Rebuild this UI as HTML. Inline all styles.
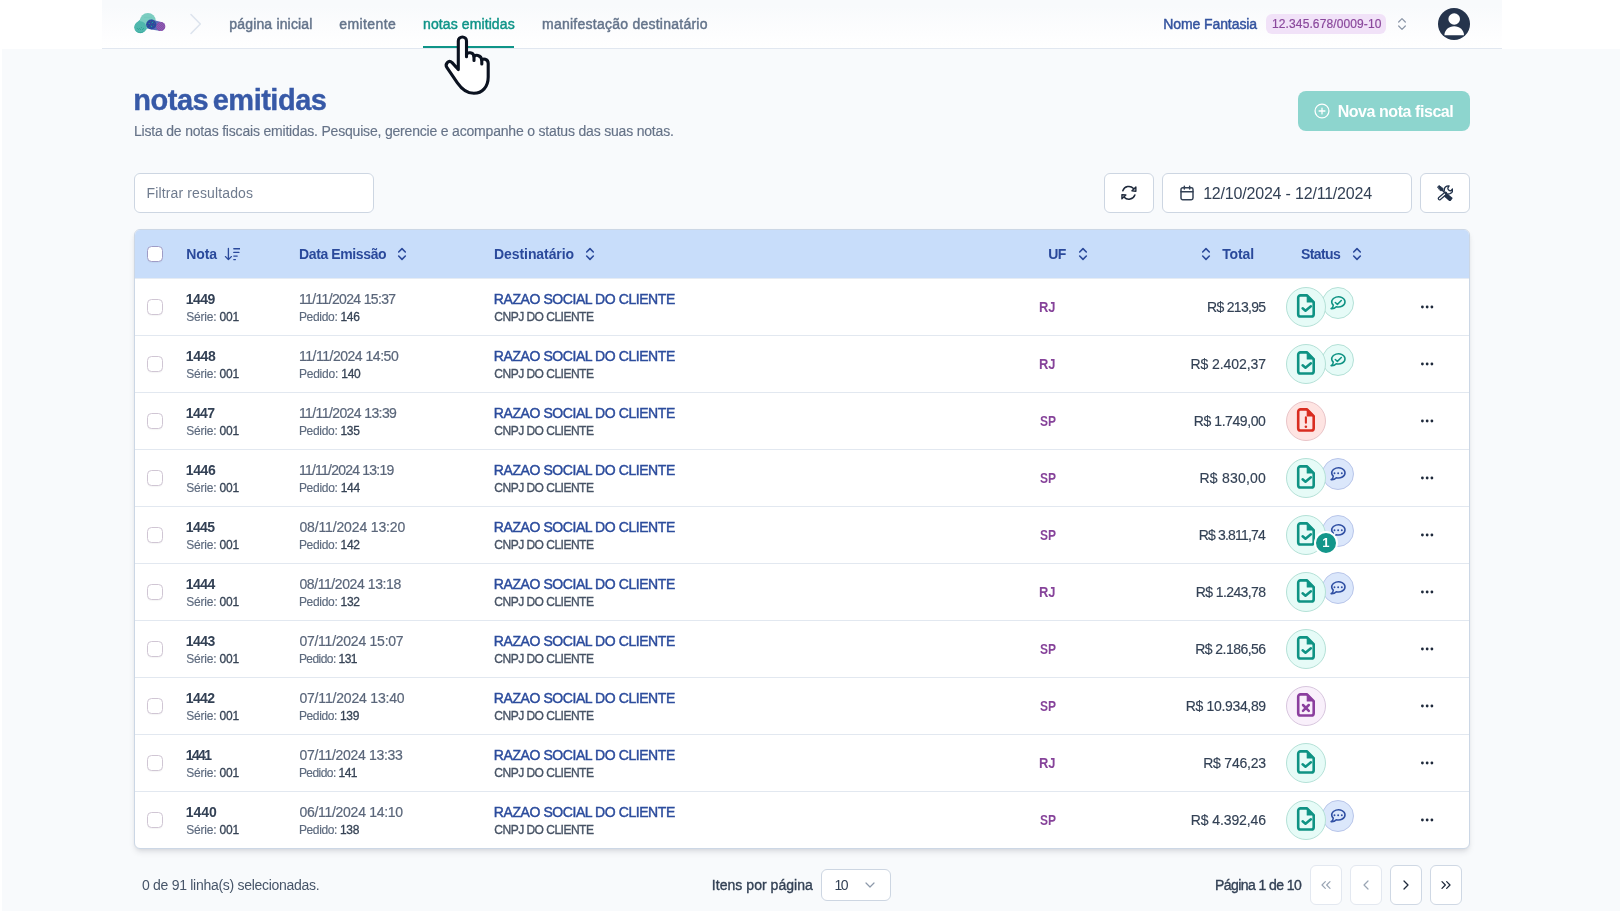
<!DOCTYPE html>
<html lang="pt-BR">
<head>
<meta charset="utf-8">
<title>notas emitidas</title>
<style>
*{box-sizing:border-box}
html,body{margin:0;padding:0;background:#fff}
body{font-family:"Liberation Sans",sans-serif;color:#334155;-webkit-font-smoothing:antialiased}
.page{position:relative;width:1620px;height:911px;overflow:hidden;will-change:transform}
.bg{position:absolute;left:2px;top:49px;right:0;bottom:0;background:#f8fafc}
.abs{position:absolute;white-space:nowrap}
svg{display:block}
.ic16{width:16px;height:16px;flex:none}
.ic24{width:24px;height:24px;flex:none}

/* top bar */
header.top{position:absolute;left:102px;top:0;width:1400px;height:49px;border-bottom:1px solid #e1e7f0;background:linear-gradient(#f8fafc 0,#f8fafc 12%,#fdfdfe 70%,#fff 100%)}
nav a{position:absolute;top:14px;font-size:14px;line-height:20px;color:#64748b;text-decoration:none;white-space:nowrap;-webkit-text-stroke:.45px currentColor}
nav a.on{color:#0f9488}
nav a.on:after{content:"";position:absolute;left:-.4px;right:.3px;top:32px;height:2px;background:#0f9488}
.org{position:absolute;top:14px;font-size:14px;line-height:20px;color:#34539f;white-space:nowrap;-webkit-text-stroke:.45px currentColor}
.pill{position:absolute;left:1164px;top:14px;width:120px;height:20px;border-radius:6px;background:#f1e2f8;color:#8a489c;font-size:12px;line-height:20px;white-space:nowrap;padding-left:6.05px;-webkit-text-stroke:.2px currentColor}
.avatar{position:absolute;left:1336px;top:8px;width:32px;height:32px}

/* heading */
h1{position:absolute;left:133.34px;top:82px;margin:0;font-size:29px;line-height:36px;font-weight:700;color:#3759a7;white-space:nowrap;-webkit-text-stroke:.35px currentColor}
p.sub{-webkit-text-stroke:.15px currentColor;position:absolute;left:133.96px;top:121px;margin:0;font-size:14px;line-height:20px;color:#667388;white-space:nowrap}
.btn-new{position:absolute;left:1298px;top:91px;width:172px;height:40px;border-radius:8px;background:#8dd5ce;color:#fff;font-weight:700;font-size:16px;line-height:40px;white-space:nowrap}
.btn-new svg{position:absolute;left:16px;top:12px}
.btn-new span{position:absolute;left:39.65px;top:1px}

/* toolbar */
.field{position:absolute;top:173px;height:40px;border:1px solid #cdd6e2;border-radius:6px;background:#fff}
.field.filter{left:134px;width:240px;font-size:14px;line-height:38px;color:#6f7b8e;padding-left:11.56px;white-space:nowrap}
.field svg{position:absolute}
.field.date span{position:absolute;left:40.15px;top:1px;font-size:16px;line-height:38px;color:#334155;white-space:nowrap}

/* table */
.card{position:absolute;left:134px;top:229px;width:1336px;height:620px;border:1px solid #ccd7e5;border-radius:6px;background:#fff;overflow:hidden;box-shadow:0 4px 6px -1px rgba(15,23,42,.10),0 2px 4px -2px rgba(15,23,42,.10)}
table{border-collapse:separate;border-spacing:0;table-layout:fixed;width:1334px}
th,td{padding:0;margin:0;text-align:left;white-space:nowrap;overflow:visible}
thead th{height:49px;border-bottom:1px solid #e6ecf4;background:#c8ddfa;font-size:14px;line-height:20px;font-weight:700;color:#2a499b}
tbody td{height:57px;border-bottom:1px solid #e2e8f0;vertical-align:middle}
tbody tr:last-child td{height:56px;border-bottom:0}
.hl{display:block;height:20px}
thead svg{position:absolute;top:16px}
.cb{display:block;width:16px;height:16px;border:1px solid #d0c6d4;border-radius:4.5px;background:#fff;margin-left:12px;box-shadow:0 1px 1px rgba(0,0,0,.04)}
thead .cb{border-color:#9f9cc6}
.l1{font-size:14px;line-height:20px}
.l2{font-size:12px;line-height:16px;color:#5d6a7e;-webkit-text-stroke:.15px currentColor}
.l2 b{font-weight:400;color:#364355;-webkit-text-stroke:.3px currentColor}
.b{font-weight:700;color:#334155}
.dt{color:#5a667a;-webkit-text-stroke:.2px currentColor}
.rz{color:#2c4c9d;-webkit-text-stroke:.45px currentColor}
.cn{color:#475365;-webkit-text-stroke:.35px currentColor}
.uf{display:inline-block;font-size:14px;line-height:20px;font-weight:700;color:#86439a;transform-origin:0 50%}
.tot{font-size:14px;line-height:20px;color:#334155;-webkit-text-stroke:.15px currentColor}
.tot{display:inline-block}
.stw{position:relative;height:56px}
.st{position:absolute;left:8.5px;top:8px;width:40px;height:40px;border-radius:50%;border:1px solid;z-index:2}
.st svg{position:absolute;left:7.500px;top:6px}
.st-ok{background:#e6fbf7;border-color:#b4e1d7}
.st-err{background:#fee4e2;border-color:#e9c4c8}
.st-can{background:#f9f0fb;border-color:#d8c6de}
.ch{position:absolute;left:45px;top:8px;width:32px;height:32px;border-radius:50%;border:1px solid;z-index:1}
.ch svg{position:absolute;left:7px;top:7px}
.ch-ok{background:#e6fbf7;border-color:#b4e1d7}
.ch-msg{background:#dbe7fb;border-color:#b9c6ea}
.bdg{position:absolute;left:37px;top:24px;width:24px;height:24px;border-radius:50%;background:#13968a;border:2px solid #fff;color:#fff;font-size:13px;line-height:20px;font-weight:700;text-align:center;z-index:3;text-indent:-.5px}
.dots{display:block;margin-left:20px;width:16px;height:16px}

/* footer */
.ft{position:absolute;top:875px;font-size:14px;line-height:20px;white-space:nowrap}
.sel{position:absolute;left:821px;top:869px;width:70px;height:32px;border:1px solid #cdd6e2;border-radius:6px;background:#fff;font-size:14px;line-height:30px;color:#334155}
.sel span{position:absolute;left:12.38px;top:0}
.sel svg{position:absolute;left:40px;top:7px}
.pg{position:absolute;top:865px;width:32px;height:40px;border:1px solid #cfd8e4;border-radius:6px;background:#fff}
.pg svg{position:absolute;left:7px;top:11px}
.pg.dis{border-color:#e3e8f0}
</style>
</head>
<body>
<div class="page">
<div class="bg"></div>

<header class="top">
  <svg class="abs" style="left:30px;top:10px" width="38" height="26" viewBox="0 0 38 26">
    <defs>
      <pattern id="pd1" width="2" height="2" patternUnits="userSpaceOnUse"><rect width="1" height="1" fill="#6b80c8"/><rect x="1" y="1" width="1" height="1" fill="#6b80c8"/></pattern>
    </defs>
    <line x1="8.300" y1="17.300" x2="14" y2="12" stroke="#4fb7ad" stroke-width="11.600" stroke-linecap="round"/>
    <circle cx="15.850" cy="10.800" r="7.900" fill="#7bcdc1"/>
    <circle cx="8.300" cy="17.300" r="6" fill="#4fb7ad"/>
    <path d="M19.200 9.400L30.300 12.250 28.800 21 19.200 19.600z" fill="#5b70b9"/>
    <circle cx="28.800" cy="16.500" r="4.500" fill="#9a3fa0"/>
    <circle cx="28.800" cy="16.500" r="4.500" fill="url(#pd1)" opacity=".7"/>
    <circle cx="19.200" cy="14.500" r="5.100" fill="#2a4ba0"/>
    <g fill="#19b394"><circle cx="17.300" cy="13.500" r=".55"/><circle cx="20.400" cy="12.400" r=".55"/><circle cx="19.500" cy="16.400" r=".55"/></g>
    <g fill="#7a6c66"><circle cx="18.400" cy="11.300" r=".4"/><circle cx="21.600" cy="11.300" r=".4"/><circle cx="16.300" cy="13.400" r=".4"/><circle cx="19.500" cy="13.400" r=".4"/><circle cx="22.500" cy="13.400" r=".4"/><circle cx="15.400" cy="15.400" r=".4"/><circle cx="18.400" cy="15.400" r=".4"/><circle cx="21.600" cy="15.400" r=".4"/><circle cx="17.500" cy="17.500" r=".4"/></g>
    <g fill="#2a9f91"><circle cx="5.300" cy="18.400" r=".5"/><circle cx="7.400" cy="18.400" r=".5"/><circle cx="9.400" cy="17.500" r=".5"/><circle cx="11.500" cy="18.400" r=".5"/><circle cx="6.400" cy="19.500" r=".5"/><circle cx="8.500" cy="19.500" r=".5"/><circle cx="10.600" cy="19.500" r=".5"/><path d="M5 21.300c2 1.600 5 1.600 7-.2-1.500 2.300-5.300 2.500-7 .2z"/></g>
    <g fill="#5bbdb2"><circle cx="13" cy="7.300" r=".45"/><circle cx="15" cy="7.300" r=".45"/><circle cx="17" cy="7.300" r=".45"/><circle cx="19" cy="7.300" r=".45"/></g>
  </svg>
  <svg class="abs" style="left:84px;top:12px" width="20" height="24" viewBox="0 0 20 24" fill="none" stroke="#dde4ee" stroke-width="1.6" stroke-linecap="round" stroke-linejoin="round"><path d="M5 2.5l9.3 9.5-9.3 9.5"/></svg>
  <nav>
    <a style="left:127.27px;letter-spacing:0.17px">página inicial</a>
    <a style="left:237.21px;letter-spacing:0.42px">emitente</a>
    <a class="on" style="left:321.07px;letter-spacing:0.10px">notas emitidas</a>
    <a style="left:439.97px;letter-spacing:0.25px">manifestação destinatário</a>
  </nav>
  <div class="org" style="left:1061.16px;letter-spacing:-0.08px">Nome Fantasia</div>
  <div class="pill"><span style="letter-spacing:0.11px">12.345.678/0009-10</span></div>
  <svg class="abs ic16" style="left:1292px;top:16px" viewBox="0 0 24 24" fill="none" stroke="#8a95a6" stroke-width="1.8" stroke-linecap="round" stroke-linejoin="round"><path d="m7 15 5 5 5-5"/><path d="m7 9 5-5 5 5"/></svg>
  <svg class="avatar" viewBox="0 0 32 32"><circle cx="16" cy="16" r="16" fill="#25344c"/><circle cx="16.2" cy="11" r="5.8" fill="#fff"/><path d="M6.4 27.2c0-5 4.300-8.900 9.800-8.900s9.800 3.900 9.800 8.900z" fill="#fff"/></svg>
</header>

<main>
  <h1 style="letter-spacing:-0.50px;word-spacing:-3px">notas emitidas</h1>
  <p class="sub" style="letter-spacing:-0.19px">Lista de notas fiscais emitidas. Pesquise, gerencie e acompanhe o status das suas notas.</p>
  <div class="btn-new">
    <svg class="ic16" viewBox="0 0 24 24" fill="none" stroke="#fff" stroke-width="1.9" stroke-linecap="round"><circle cx="12" cy="12" r="10.4"/><path d="M7.600 12h8.800M12 7.600v8.800"/></svg>
    <span style="letter-spacing:-0.44px">Nova nota fiscal</span>
  </div>

  <div class="field filter"><span style="letter-spacing:0.13px">Filtrar resultados</span></div>
  <div class="field" style="left:1104px;width:50px">
    <svg class="ic16" style="left:16px;top:11px" viewBox="0 0 16 16" fill="none" stroke="#1e293b" stroke-width="1.500" stroke-linecap="round" stroke-linejoin="round"><path d="M1.800 5.700A6.400 6.400 0 0 1 12.500 3.500"/><path d="M14.900 2v4.300l-4-.500z" fill="#1e293b" fill-opacity=".35" stroke-width="1.300"/><path d="M13.850 10A6.400 6.400 0 0 1 3.200 12.200"/><path d="M.9 13.900V9.600l4 .400z" fill="#1e293b" fill-opacity=".35" stroke-width="1.300"/></svg>
  </div>
  <div class="field date" style="left:1162px;width:250px">
    <svg class="ic16" style="left:15.5px;top:11px" viewBox="0 0 24 24" fill="none" stroke="#334155" stroke-width="2.200" stroke-linecap="round" stroke-linejoin="round"><path d="M8 2v4M16 2v4"/><rect width="18" height="18" x="3" y="4" rx="2.500"/><path d="M3 10h18"/></svg>
    <span style="letter-spacing:-0.19px">12/10/2024 - 12/11/2024</span>
  </div>
  <div class="field" style="left:1420px;width:50px">
    <svg class="ic16" style="left:16px;top:11px" viewBox="0 0 16 16" fill="none" stroke="#22324a" stroke-linecap="round" stroke-linejoin="round"><path d="M8.500 8.500 2.600 13.500" stroke-width="3.700"/><path d="M8.500 8.500 2.600 13.500" stroke="#fff" stroke-width="1.300"/><path d="M7.400 5.300C7 2.700 9 .700 12.100.900L10.900 2.900c-.300 1.700 1.300 3.100 3.100 2.800l1.500-1.700c.500 2-.500 4-2.500 4.700L10 9.300" stroke-width="1.300"/><path d="M4.800 4.600 10 9.800" stroke-width="1.500"/><path d="M.700 1.800 2.200.500 6.300 3.700 5.600 5.700 3.400 5.600z" fill="#22324a" stroke-width=".8"/><path d="M9.600 9.300 14.600 13.200 12.900 15.400 8.200 11.300z" fill="#22324a" stroke-width="1.800"/></svg>
  </div>

  <div class="card">
  <table>
    <colgroup><col style="width:39px"><col style="width:113px"><col style="width:195px"><col style="width:545px"><col style="width:73px"><col style="width:177px"><col style="width:123px"><col style="width:69px"></colgroup>
    <thead><tr>
      <th><span class="cb"></span></th>
      <th style="padding-left:12.37px"><span class="hl"><span style="letter-spacing:-0.11px">Nota</span><svg class="ic16" style="left:89.400px" viewBox="0 0 16 16" fill="none" stroke="#2a499b" stroke-width="1.35" stroke-linecap="round" stroke-linejoin="round"><path d="M4.400 2.400v11.200M1.500 10.600l2.900 3 2.900-3M9.800 2.700h6.800M9.800 6.400h5.100M9.800 10.100h3.400M9.800 13.600h1.600"/></svg></span></th>
      <th style="padding-left:12.07px"><span class="hl"><span style="letter-spacing:-0.39px">Data Emissão</span><svg class="ic16" style="left:259.1px" viewBox="0 0 24 24" fill="none" stroke="#2b4a9b" stroke-width="2.4000000000000004" stroke-linecap="round" stroke-linejoin="round"><path d="m7 15 5 5 5-5"/><path d="m7 9 5-5 5 5"/></svg></span></th>
      <th style="padding-left:12.07px"><span class="hl"><span style="letter-spacing:-0.08px">Destinatário</span><svg class="ic16" style="left:447.4px" viewBox="0 0 24 24" fill="none" stroke="#2b4a9b" stroke-width="2.4000000000000004" stroke-linecap="round" stroke-linejoin="round"><path d="m7 15 5 5 5-5"/><path d="m7 9 5-5 5 5"/></svg></span></th>
      <th style="padding-left:21.29px"><span class="hl"><span style="letter-spacing:-0.75px">UF</span><svg class="ic16" style="left:939.6px" viewBox="0 0 24 24" fill="none" stroke="#2b4a9b" stroke-width="2.4000000000000004" stroke-linecap="round" stroke-linejoin="round"><path d="m7 15 5 5 5-5"/><path d="m7 9 5-5 5 5"/></svg></span></th>
      <th style="padding-left:122.25px"><span class="hl"><svg class="ic16" style="left:1062.8px" viewBox="0 0 24 24" fill="none" stroke="#2b4a9b" stroke-width="2.4000000000000004" stroke-linecap="round" stroke-linejoin="round"><path d="m7 15 5 5 5-5"/><path d="m7 9 5-5 5 5"/></svg><span style="letter-spacing:-0.14px">Total</span></span></th>
      <th style="padding-left:23.93px"><span class="hl"><span style="letter-spacing:-0.60px">Status</span><svg class="ic16" style="left:1214.1px" viewBox="0 0 24 24" fill="none" stroke="#2b4a9b" stroke-width="2.4000000000000004" stroke-linecap="round" stroke-linejoin="round"><path d="m7 15 5 5 5-5"/><path d="m7 9 5-5 5 5"/></svg></span></th>
      <th></th>
    </tr></thead>
    <tbody>
<tr>
<td class="c-chk"><span class="cb"></span></td>
<td class="c-nota"><div class="l1 b" style="margin-left:11.83px;letter-spacing:-0.56px">1449</div><div class="l2" style="margin-left:12.15px;letter-spacing:-0.18px">Série: <b>001</b></div></td>
<td class="c-data"><div class="l1 dt" style="margin-left:11.98px;letter-spacing:-0.65px">11/11/2024 15:37</div><div class="l2" style="margin-left:11.90px;letter-spacing:-0.31px">Pedido: <b>146</b></div></td>
<td class="c-dest"><div class="l1 rz" style="margin-left:11.86px;letter-spacing:-0.43px">RAZAO SOCIAL DO CLIENTE</div><div class="l2 cn" style="margin-left:12.35px;letter-spacing:-0.51px">CNPJ DO CLIENTE</div></td>
<td class="c-uf"><span class="uf" style="margin-left:12.27px;transform:scaleX(0.924)">RJ</span></td>
<td class="c-tot"><span class="tot" style="margin-left:106.96px;letter-spacing:-0.68px">R$ 213,95</span></td>
<td class="c-st"><div class="stw"><span class="st st-ok"><svg class="ic24" viewBox="0 0 24 24" fill="none" stroke="#0f9384" stroke-width="2.6" stroke-linecap="round" stroke-linejoin="round"><path d="M6.7 1.35h6.3l6.7 6.7v12.1a2.3 2.3 0 0 1-2.3 2.3H6.500a2.3 2.3 0 0 1-2.3-2.300V3.650a2.3 2.3 0 0 1 2.500-2.300z"/><path d="M13.300 1.500v6.400h6.400z" fill="#0f9384" stroke-width="1.200"/><path d="m8.600 14.300 2.900 2.500 5.400-4.500" stroke-width="2.5"/></svg></span><span class="ch ch-ok"><svg class="ic16" viewBox="0 0 16 16" fill="none" stroke="#0f9384" stroke-width="1.550" stroke-linecap="round" stroke-linejoin="round"><path d="M6.300 11.750A6.650 5.100 0 1 0 3.260 10.180C3.200 11.600 2.400 12.900 1.100 13.700 3.100 13.900 5 13.200 6.300 11.750z"/><path d="m5.300 7.500 2.100 1.900 3.900-3.900" stroke-width="1.500"/></svg></span></div></td>
<td class="c-act"><svg class="dots" viewBox="0 0 16 16" fill="#1e293b"><circle cx="2.400" cy="8" r="1.400"/><circle cx="7.150" cy="8" r="1.400"/><circle cx="11.900" cy="8" r="1.400"/></svg></td>
</tr>
<tr>
<td class="c-chk"><span class="cb"></span></td>
<td class="c-nota"><div class="l1 b" style="margin-left:11.83px;letter-spacing:-0.39px">1448</div><div class="l2" style="margin-left:12.15px;letter-spacing:-0.18px">Série: <b>001</b></div></td>
<td class="c-data"><div class="l1 dt" style="margin-left:11.98px;letter-spacing:-0.48px">11/11/2024 14:50</div><div class="l2" style="margin-left:11.90px;letter-spacing:-0.22px">Pedido: <b>140</b></div></td>
<td class="c-dest"><div class="l1 rz" style="margin-left:11.86px;letter-spacing:-0.43px">RAZAO SOCIAL DO CLIENTE</div><div class="l2 cn" style="margin-left:12.35px;letter-spacing:-0.51px">CNPJ DO CLIENTE</div></td>
<td class="c-uf"><span class="uf" style="margin-left:12.27px;transform:scaleX(0.924)">RJ</span></td>
<td class="c-tot"><span class="tot" style="margin-left:90.46px;letter-spacing:-0.06px">R$ 2.402,37</span></td>
<td class="c-st"><div class="stw"><span class="st st-ok"><svg class="ic24" viewBox="0 0 24 24" fill="none" stroke="#0f9384" stroke-width="2.6" stroke-linecap="round" stroke-linejoin="round"><path d="M6.7 1.35h6.3l6.7 6.7v12.1a2.3 2.3 0 0 1-2.3 2.3H6.500a2.3 2.3 0 0 1-2.3-2.300V3.650a2.3 2.3 0 0 1 2.500-2.300z"/><path d="M13.300 1.500v6.400h6.400z" fill="#0f9384" stroke-width="1.200"/><path d="m8.600 14.300 2.900 2.500 5.400-4.500" stroke-width="2.5"/></svg></span><span class="ch ch-ok"><svg class="ic16" viewBox="0 0 16 16" fill="none" stroke="#0f9384" stroke-width="1.550" stroke-linecap="round" stroke-linejoin="round"><path d="M6.300 11.750A6.650 5.100 0 1 0 3.260 10.180C3.200 11.600 2.400 12.900 1.100 13.700 3.100 13.900 5 13.200 6.300 11.750z"/><path d="m5.300 7.500 2.100 1.900 3.900-3.900" stroke-width="1.500"/></svg></span></div></td>
<td class="c-act"><svg class="dots" viewBox="0 0 16 16" fill="#1e293b"><circle cx="2.400" cy="8" r="1.400"/><circle cx="7.150" cy="8" r="1.400"/><circle cx="11.900" cy="8" r="1.400"/></svg></td>
</tr>
<tr>
<td class="c-chk"><span class="cb"></span></td>
<td class="c-nota"><div class="l1 b" style="margin-left:11.83px;letter-spacing:-0.65px">1447</div><div class="l2" style="margin-left:12.15px;letter-spacing:-0.18px">Série: <b>001</b></div></td>
<td class="c-data"><div class="l1 dt" style="margin-left:11.98px;letter-spacing:-0.60px">11/11/2024 13:39</div><div class="l2" style="margin-left:11.90px;letter-spacing:-0.31px">Pedido: <b>135</b></div></td>
<td class="c-dest"><div class="l1 rz" style="margin-left:11.86px;letter-spacing:-0.43px">RAZAO SOCIAL DO CLIENTE</div><div class="l2 cn" style="margin-left:12.35px;letter-spacing:-0.51px">CNPJ DO CLIENTE</div></td>
<td class="c-uf"><span class="uf" style="margin-left:12.93px;transform:scaleX(0.857)">SP</span></td>
<td class="c-tot"><span class="tot" style="margin-left:93.71px;letter-spacing:-0.41px">R$ 1.749,00</span></td>
<td class="c-st"><div class="stw"><span class="st st-err"><svg class="ic24" viewBox="0 0 24 24" fill="none" stroke="#d92d20" stroke-width="2.6" stroke-linecap="round" stroke-linejoin="round"><path d="M6.7 1.35h6.3l6.7 6.7v12.1a2.3 2.3 0 0 1-2.3 2.3H6.500a2.3 2.3 0 0 1-2.3-2.300V3.650a2.3 2.3 0 0 1 2.500-2.300z"/><path d="M13.300 1.500v6.400h6.400z" fill="#d92d20" stroke-width="1.200"/><path d="M11.900 9.400v5.300" stroke-width="2.100"/><circle cx="11.900" cy="18.700" r="1.300" fill="#d92d20" stroke="none"/></svg></span></div></td>
<td class="c-act"><svg class="dots" viewBox="0 0 16 16" fill="#1e293b"><circle cx="2.400" cy="8" r="1.400"/><circle cx="7.150" cy="8" r="1.400"/><circle cx="11.900" cy="8" r="1.400"/></svg></td>
</tr>
<tr>
<td class="c-chk"><span class="cb"></span></td>
<td class="c-nota"><div class="l1 b" style="margin-left:11.83px;letter-spacing:-0.39px">1446</div><div class="l2" style="margin-left:12.15px;letter-spacing:-0.18px">Série: <b>001</b></div></td>
<td class="c-data"><div class="l1 dt" style="margin-left:11.98px;letter-spacing:-0.78px">11/11/2024 13:19</div><div class="l2" style="margin-left:11.90px;letter-spacing:-0.28px">Pedido: <b>144</b></div></td>
<td class="c-dest"><div class="l1 rz" style="margin-left:11.86px;letter-spacing:-0.43px">RAZAO SOCIAL DO CLIENTE</div><div class="l2 cn" style="margin-left:12.35px;letter-spacing:-0.51px">CNPJ DO CLIENTE</div></td>
<td class="c-uf"><span class="uf" style="margin-left:12.93px;transform:scaleX(0.857)">SP</span></td>
<td class="c-tot"><span class="tot" style="margin-left:99.46px;letter-spacing:0.23px">R$ 830,00</span></td>
<td class="c-st"><div class="stw"><span class="st st-ok"><svg class="ic24" viewBox="0 0 24 24" fill="none" stroke="#0f9384" stroke-width="2.6" stroke-linecap="round" stroke-linejoin="round"><path d="M6.7 1.35h6.3l6.7 6.7v12.1a2.3 2.3 0 0 1-2.3 2.3H6.500a2.3 2.3 0 0 1-2.3-2.300V3.650a2.3 2.3 0 0 1 2.500-2.300z"/><path d="M13.300 1.500v6.400h6.400z" fill="#0f9384" stroke-width="1.200"/><path d="m8.600 14.300 2.900 2.500 5.400-4.500" stroke-width="2.5"/></svg></span><span class="ch ch-msg"><svg class="ic16" viewBox="0 0 16 16" fill="none" stroke="#2f4fa3" stroke-width="1.550" stroke-linecap="round" stroke-linejoin="round"><path d="M6.300 11.750A6.650 5.100 0 1 0 3.260 10.180C3.200 11.600 2.400 12.900 1.100 13.700 3.100 13.900 5 13.200 6.300 11.750z"/><circle cx="4.500" cy="7.200" r=".95" fill="#2f4fa3" stroke="none"/><circle cx="8.150" cy="7.200" r=".95" fill="#2f4fa3" stroke="none"/><circle cx="11.800" cy="7.200" r=".95" fill="#2f4fa3" stroke="none"/></svg></span></div></td>
<td class="c-act"><svg class="dots" viewBox="0 0 16 16" fill="#1e293b"><circle cx="2.400" cy="8" r="1.400"/><circle cx="7.150" cy="8" r="1.400"/><circle cx="11.900" cy="8" r="1.400"/></svg></td>
</tr>
<tr>
<td class="c-chk"><span class="cb"></span></td>
<td class="c-nota"><div class="l1 b" style="margin-left:11.83px;letter-spacing:-0.64px">1445</div><div class="l2" style="margin-left:12.15px;letter-spacing:-0.18px">Série: <b>001</b></div></td>
<td class="c-data"><div class="l1 dt" style="margin-left:12.41px;letter-spacing:-0.14px">08/11/2024 13:20</div><div class="l2" style="margin-left:11.90px;letter-spacing:-0.30px">Pedido: <b>142</b></div></td>
<td class="c-dest"><div class="l1 rz" style="margin-left:11.86px;letter-spacing:-0.43px">RAZAO SOCIAL DO CLIENTE</div><div class="l2 cn" style="margin-left:12.35px;letter-spacing:-0.51px">CNPJ DO CLIENTE</div></td>
<td class="c-uf"><span class="uf" style="margin-left:12.93px;transform:scaleX(0.857)">SP</span></td>
<td class="c-tot"><span class="tot" style="margin-left:98.71px;letter-spacing:-0.81px">R$ 3.811,74</span></td>
<td class="c-st"><div class="stw"><span class="st st-ok"><svg class="ic24" viewBox="0 0 24 24" fill="none" stroke="#0f9384" stroke-width="2.6" stroke-linecap="round" stroke-linejoin="round"><path d="M6.7 1.35h6.3l6.7 6.7v12.1a2.3 2.3 0 0 1-2.3 2.3H6.500a2.3 2.3 0 0 1-2.3-2.300V3.650a2.3 2.3 0 0 1 2.500-2.300z"/><path d="M13.300 1.500v6.400h6.400z" fill="#0f9384" stroke-width="1.200"/><path d="m8.600 14.300 2.900 2.500 5.400-4.500" stroke-width="2.5"/></svg></span><span class="ch ch-msg"><svg class="ic16" viewBox="0 0 16 16" fill="none" stroke="#2f4fa3" stroke-width="1.550" stroke-linecap="round" stroke-linejoin="round"><path d="M6.300 11.750A6.650 5.100 0 1 0 3.260 10.180C3.200 11.600 2.400 12.900 1.100 13.700 3.100 13.900 5 13.200 6.300 11.750z"/><circle cx="4.500" cy="7.200" r=".95" fill="#2f4fa3" stroke="none"/><circle cx="8.150" cy="7.200" r=".95" fill="#2f4fa3" stroke="none"/><circle cx="11.800" cy="7.200" r=".95" fill="#2f4fa3" stroke="none"/></svg></span><span class="bdg">1</span></div></td>
<td class="c-act"><svg class="dots" viewBox="0 0 16 16" fill="#1e293b"><circle cx="2.400" cy="8" r="1.400"/><circle cx="7.150" cy="8" r="1.400"/><circle cx="11.900" cy="8" r="1.400"/></svg></td>
</tr>
<tr>
<td class="c-chk"><span class="cb"></span></td>
<td class="c-nota"><div class="l1 b" style="margin-left:11.83px;letter-spacing:-0.54px">1444</div><div class="l2" style="margin-left:12.15px;letter-spacing:-0.18px">Série: <b>001</b></div></td>
<td class="c-data"><div class="l1 dt" style="margin-left:12.41px;letter-spacing:-0.41px">08/11/2024 13:18</div><div class="l2" style="margin-left:11.90px;letter-spacing:-0.30px">Pedido: <b>132</b></div></td>
<td class="c-dest"><div class="l1 rz" style="margin-left:11.86px;letter-spacing:-0.43px">RAZAO SOCIAL DO CLIENTE</div><div class="l2 cn" style="margin-left:12.35px;letter-spacing:-0.51px">CNPJ DO CLIENTE</div></td>
<td class="c-uf"><span class="uf" style="margin-left:12.27px;transform:scaleX(0.924)">RJ</span></td>
<td class="c-tot"><span class="tot" style="margin-left:95.71px;letter-spacing:-0.59px">R$ 1.243,78</span></td>
<td class="c-st"><div class="stw"><span class="st st-ok"><svg class="ic24" viewBox="0 0 24 24" fill="none" stroke="#0f9384" stroke-width="2.6" stroke-linecap="round" stroke-linejoin="round"><path d="M6.7 1.35h6.3l6.7 6.7v12.1a2.3 2.3 0 0 1-2.3 2.3H6.500a2.3 2.3 0 0 1-2.3-2.300V3.650a2.3 2.3 0 0 1 2.500-2.300z"/><path d="M13.300 1.500v6.400h6.400z" fill="#0f9384" stroke-width="1.200"/><path d="m8.600 14.300 2.900 2.500 5.400-4.500" stroke-width="2.5"/></svg></span><span class="ch ch-msg"><svg class="ic16" viewBox="0 0 16 16" fill="none" stroke="#2f4fa3" stroke-width="1.550" stroke-linecap="round" stroke-linejoin="round"><path d="M6.300 11.750A6.650 5.100 0 1 0 3.260 10.180C3.200 11.600 2.400 12.900 1.100 13.700 3.100 13.900 5 13.200 6.300 11.750z"/><circle cx="4.500" cy="7.200" r=".95" fill="#2f4fa3" stroke="none"/><circle cx="8.150" cy="7.200" r=".95" fill="#2f4fa3" stroke="none"/><circle cx="11.800" cy="7.200" r=".95" fill="#2f4fa3" stroke="none"/></svg></span></div></td>
<td class="c-act"><svg class="dots" viewBox="0 0 16 16" fill="#1e293b"><circle cx="2.400" cy="8" r="1.400"/><circle cx="7.150" cy="8" r="1.400"/><circle cx="11.900" cy="8" r="1.400"/></svg></td>
</tr>
<tr>
<td class="c-chk"><span class="cb"></span></td>
<td class="c-nota"><div class="l1 b" style="margin-left:11.83px;letter-spacing:-0.56px">1443</div><div class="l2" style="margin-left:12.15px;letter-spacing:-0.18px">Série: <b>001</b></div></td>
<td class="c-data"><div class="l1 dt" style="margin-left:12.41px;letter-spacing:-0.25px">07/11/2024 15:07</div><div class="l2" style="margin-left:11.90px;letter-spacing:-0.55px">Pedido: <b>131</b></div></td>
<td class="c-dest"><div class="l1 rz" style="margin-left:11.86px;letter-spacing:-0.43px">RAZAO SOCIAL DO CLIENTE</div><div class="l2 cn" style="margin-left:12.35px;letter-spacing:-0.51px">CNPJ DO CLIENTE</div></td>
<td class="c-uf"><span class="uf" style="margin-left:12.93px;transform:scaleX(0.857)">SP</span></td>
<td class="c-tot"><span class="tot" style="margin-left:95.21px;letter-spacing:-0.54px">R$ 2.186,56</span></td>
<td class="c-st"><div class="stw"><span class="st st-ok"><svg class="ic24" viewBox="0 0 24 24" fill="none" stroke="#0f9384" stroke-width="2.6" stroke-linecap="round" stroke-linejoin="round"><path d="M6.7 1.35h6.3l6.7 6.7v12.1a2.3 2.3 0 0 1-2.3 2.3H6.500a2.3 2.3 0 0 1-2.3-2.300V3.650a2.3 2.3 0 0 1 2.500-2.300z"/><path d="M13.300 1.500v6.400h6.400z" fill="#0f9384" stroke-width="1.200"/><path d="m8.600 14.300 2.900 2.500 5.400-4.500" stroke-width="2.5"/></svg></span></div></td>
<td class="c-act"><svg class="dots" viewBox="0 0 16 16" fill="#1e293b"><circle cx="2.400" cy="8" r="1.400"/><circle cx="7.150" cy="8" r="1.400"/><circle cx="11.900" cy="8" r="1.400"/></svg></td>
</tr>
<tr>
<td class="c-chk"><span class="cb"></span></td>
<td class="c-nota"><div class="l1 b" style="margin-left:11.83px;letter-spacing:-0.64px">1442</div><div class="l2" style="margin-left:12.15px;letter-spacing:-0.18px">Série: <b>001</b></div></td>
<td class="c-data"><div class="l1 dt" style="margin-left:12.41px;letter-spacing:-0.18px">07/11/2024 13:40</div><div class="l2" style="margin-left:11.90px;letter-spacing:-0.36px">Pedido: <b>139</b></div></td>
<td class="c-dest"><div class="l1 rz" style="margin-left:11.86px;letter-spacing:-0.43px">RAZAO SOCIAL DO CLIENTE</div><div class="l2 cn" style="margin-left:12.35px;letter-spacing:-0.51px">CNPJ DO CLIENTE</div></td>
<td class="c-uf"><span class="uf" style="margin-left:12.93px;transform:scaleX(0.857)">SP</span></td>
<td class="c-tot"><span class="tot" style="margin-left:85.71px;letter-spacing:-0.33px">R$ 10.934,89</span></td>
<td class="c-st"><div class="stw"><span class="st st-can"><svg class="ic24" viewBox="0 0 24 24" fill="none" stroke="#8b3f9e" stroke-width="2.6" stroke-linecap="round" stroke-linejoin="round"><path d="M6.7 1.35h6.3l6.7 6.7v12.1a2.3 2.3 0 0 1-2.3 2.3H6.500a2.3 2.3 0 0 1-2.3-2.300V3.650a2.3 2.3 0 0 1 2.500-2.300z"/><path d="M13.300 1.500v6.400h6.400z" fill="#8b3f9e" stroke-width="1.200"/><path d="m9 12 5.800 5.800M14.800 12 9 17.800" stroke-width="2.5"/></svg></span></div></td>
<td class="c-act"><svg class="dots" viewBox="0 0 16 16" fill="#1e293b"><circle cx="2.400" cy="8" r="1.400"/><circle cx="7.150" cy="8" r="1.400"/><circle cx="11.900" cy="8" r="1.400"/></svg></td>
</tr>
<tr>
<td class="c-chk"><span class="cb"></span></td>
<td class="c-nota"><div class="l1 b" style="margin-left:11.83px;letter-spacing:-1.64px">1441</div><div class="l2" style="margin-left:12.15px;letter-spacing:-0.18px">Série: <b>001</b></div></td>
<td class="c-data"><div class="l1 dt" style="margin-left:12.41px;letter-spacing:-0.30px">07/11/2024 13:33</div><div class="l2" style="margin-left:11.90px;letter-spacing:-0.55px">Pedido: <b>141</b></div></td>
<td class="c-dest"><div class="l1 rz" style="margin-left:11.86px;letter-spacing:-0.43px">RAZAO SOCIAL DO CLIENTE</div><div class="l2 cn" style="margin-left:12.35px;letter-spacing:-0.51px">CNPJ DO CLIENTE</div></td>
<td class="c-uf"><span class="uf" style="margin-left:12.27px;transform:scaleX(0.924)">RJ</span></td>
<td class="c-tot"><span class="tot" style="margin-left:103.21px;letter-spacing:-0.21px">R$ 746,23</span></td>
<td class="c-st"><div class="stw"><span class="st st-ok"><svg class="ic24" viewBox="0 0 24 24" fill="none" stroke="#0f9384" stroke-width="2.6" stroke-linecap="round" stroke-linejoin="round"><path d="M6.7 1.35h6.3l6.7 6.7v12.1a2.3 2.3 0 0 1-2.3 2.3H6.500a2.3 2.3 0 0 1-2.3-2.300V3.650a2.3 2.3 0 0 1 2.500-2.300z"/><path d="M13.300 1.500v6.400h6.400z" fill="#0f9384" stroke-width="1.200"/><path d="m8.600 14.300 2.900 2.500 5.400-4.500" stroke-width="2.5"/></svg></span></div></td>
<td class="c-act"><svg class="dots" viewBox="0 0 16 16" fill="#1e293b"><circle cx="2.400" cy="8" r="1.400"/><circle cx="7.150" cy="8" r="1.400"/><circle cx="11.900" cy="8" r="1.400"/></svg></td>
</tr>
<tr>
<td class="c-chk"><span class="cb"></span></td>
<td class="c-nota"><div class="l1 b" style="margin-left:11.83px;letter-spacing:-0.07px">1440</div><div class="l2" style="margin-left:12.15px;letter-spacing:-0.18px">Série: <b>001</b></div></td>
<td class="c-data"><div class="l1 dt" style="margin-left:12.41px;letter-spacing:-0.28px">06/11/2024 14:10</div><div class="l2" style="margin-left:11.90px;letter-spacing:-0.36px">Pedido: <b>138</b></div></td>
<td class="c-dest"><div class="l1 rz" style="margin-left:11.86px;letter-spacing:-0.43px">RAZAO SOCIAL DO CLIENTE</div><div class="l2 cn" style="margin-left:12.35px;letter-spacing:-0.51px">CNPJ DO CLIENTE</div></td>
<td class="c-uf"><span class="uf" style="margin-left:12.93px;transform:scaleX(0.857)">SP</span></td>
<td class="c-tot"><span class="tot" style="margin-left:90.71px;letter-spacing:-0.09px">R$ 4.392,46</span></td>
<td class="c-st"><div class="stw"><span class="st st-ok"><svg class="ic24" viewBox="0 0 24 24" fill="none" stroke="#0f9384" stroke-width="2.6" stroke-linecap="round" stroke-linejoin="round"><path d="M6.7 1.35h6.3l6.7 6.7v12.1a2.3 2.3 0 0 1-2.3 2.3H6.500a2.3 2.3 0 0 1-2.3-2.300V3.650a2.3 2.3 0 0 1 2.500-2.300z"/><path d="M13.300 1.500v6.400h6.400z" fill="#0f9384" stroke-width="1.200"/><path d="m8.600 14.300 2.900 2.500 5.400-4.500" stroke-width="2.5"/></svg></span><span class="ch ch-msg"><svg class="ic16" viewBox="0 0 16 16" fill="none" stroke="#2f4fa3" stroke-width="1.550" stroke-linecap="round" stroke-linejoin="round"><path d="M6.300 11.750A6.650 5.100 0 1 0 3.260 10.180C3.200 11.600 2.400 12.900 1.100 13.700 3.100 13.900 5 13.200 6.300 11.750z"/><circle cx="4.500" cy="7.200" r=".95" fill="#2f4fa3" stroke="none"/><circle cx="8.150" cy="7.200" r=".95" fill="#2f4fa3" stroke="none"/><circle cx="11.800" cy="7.200" r=".95" fill="#2f4fa3" stroke="none"/></svg></span></div></td>
<td class="c-act"><svg class="dots" viewBox="0 0 16 16" fill="#1e293b"><circle cx="2.400" cy="8" r="1.400"/><circle cx="7.150" cy="8" r="1.400"/><circle cx="11.900" cy="8" r="1.400"/></svg></td>
</tr>
    </tbody>
  </table>
  </div>

  <div class="ft" style="left:142.01px;color:#475569;letter-spacing:-0.29px">0 de 91 linha(s) selecionadas.</div>
  <div class="ft" style="left:711.86px;color:#334155;-webkit-text-stroke:.35px currentColor;letter-spacing:0.04px">Itens por página</div>
  <div class="sel"><span style="letter-spacing:-1.45px">10</span><svg class="ic16" viewBox="0 0 24 24" fill="none" stroke="#8d99aa" stroke-width="1.8" stroke-linecap="round" stroke-linejoin="round"><path d="m6 9 6 6 6-6"/></svg></div>
  <div class="ft" style="left:1215.06px;color:#334155;-webkit-text-stroke:.35px currentColor;letter-spacing:-0.57px">Página 1 de 10</div>
  <div class="pg dis" style="left:1310px"><svg class="ic16" viewBox="0 0 24 24" fill="none" stroke="#9aa5b4" stroke-width="1.8" stroke-linecap="round" stroke-linejoin="round"><path d="m11 17-5-5 5-5"/><path d="m18 17-5-5 5-5"/></svg></div>
  <div class="pg dis" style="left:1350px"><svg class="ic16" viewBox="0 0 24 24" fill="none" stroke="#9aa5b4" stroke-width="1.8" stroke-linecap="round" stroke-linejoin="round"><path d="m15 18-6-6 6-6"/></svg></div>
  <div class="pg" style="left:1390px"><svg class="ic16" viewBox="0 0 24 24" fill="none" stroke="#1e293b" stroke-width="1.9" stroke-linecap="round" stroke-linejoin="round"><path d="m9 18 6-6-6-6"/></svg></div>
  <div class="pg" style="left:1430px"><svg class="ic16" viewBox="0 0 24 24" fill="none" stroke="#1e293b" stroke-width="1.9" stroke-linecap="round" stroke-linejoin="round"><path d="m6 17 5-5-5-5"/><path d="m13 17 5-5-5-5"/></svg></div>
</main>

<svg class="abs" style="left:430px;top:25px;z-index:20" width="80" height="80" viewBox="0 0 80 80" fill="none" stroke="#0b1220" stroke-width="3.1" stroke-linecap="round" stroke-linejoin="round">
  <path fill="#fff" d="M28.300 44.500V16.100a4.100 4.100 0 0 1 8.200 0V29.800c.5-2.700 7-3.200 7.500 1.900.5-2.300 7.300-2.300 7.800 3.500.5-2 6.400-1.500 6.400 3.300V52c0 10-6 16.300-14.300 16.300-7 0-12-4-16.500-10.500L17 42.700c-2.500-3.600 1.600-8.200 5.100-5.100z"/>
  <path d="M36.500 29.500v2.300M44 31.500v4M51.800 35v4"/>
</svg>
</div>
</body>
</html>
